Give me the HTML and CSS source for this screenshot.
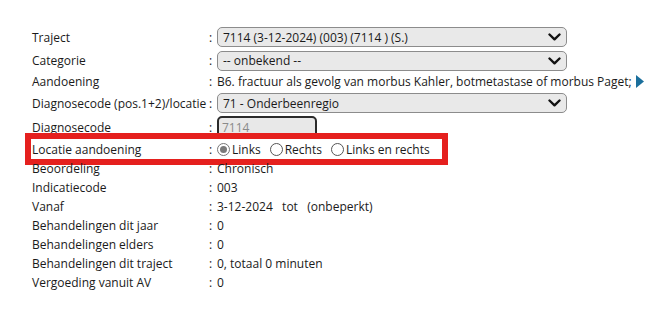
FILE: index.html
```html
<!DOCTYPE html>
<html lang="nl">
<head>
<meta charset="utf-8">
<title>Traject</title>
<link rel="stylesheet" href="styles.css">
</head>
<body>
<div class="form">
  <div class="row row-select">
    <div class="label">Traject</div>
    <div class="value"><span class="colon">:</span>
      <div class="select-wrap">
        <select class="select"><option>7114 (3-12-2024) (003) (7114 ) (S.)</option></select>
        <svg class="chev" viewBox="0 0 13 8" width="13" height="8"><path d="M1.5 1.5 L6.5 6.3 L11.5 1.5" fill="none" stroke="#111" stroke-width="2.4" stroke-linecap="round" stroke-linejoin="round"/></svg>
      </div>
    </div>
  </div>
  <div class="row row-select2">
    <div class="label">Categorie</div>
    <div class="value"><span class="colon">:</span>
      <div class="select-wrap">
        <select class="select"><option>-- onbekend --</option></select>
        <svg class="chev" viewBox="0 0 13 8" width="13" height="8"><path d="M1.5 1.5 L6.5 6.3 L11.5 1.5" fill="none" stroke="#111" stroke-width="2.4" stroke-linecap="round" stroke-linejoin="round"/></svg>
      </div>
    </div>
  </div>
  <div class="row">
    <div class="label">Aandoening</div>
    <div class="value nowrap"><span class="colon">:</span>B6. fractuur als gevolg van morbus Kahler, botmetastase of morbus Paget;<svg class="play" viewBox="0 0 8 13" width="8" height="13"><path d="M0 0 L8 6.5 L0 13 Z" fill="#1a6f9c"/></svg></div>
  </div>
  <div class="row row-select">
    <div class="label">Diagnosecode (pos.1+2)/locatie</div>
    <div class="value"><span class="colon">:</span>
      <div class="select-wrap">
        <select class="select"><option>71 - Onderbeenregio</option></select>
        <svg class="chev" viewBox="0 0 13 8" width="13" height="8"><path d="M1.5 1.5 L6.5 6.3 L11.5 1.5" fill="none" stroke="#111" stroke-width="2.4" stroke-linecap="round" stroke-linejoin="round"/></svg>
      </div>
    </div>
  </div>
  <div class="row row-select">
    <div class="label">Diagnosecode</div>
    <div class="value"><span class="colon">:</span><input class="input" type="text" value="7114" readonly></div>
  </div>
  <div class="row row-hl">
    <div class="label">Locatie aandoening</div>
    <div class="value"><span class="colon">:</span>
      <label class="radio"><span class="dot checked"></span>Links</label>
      <label class="radio"><span class="dot"></span>Rechts</label>
      <label class="radio"><span class="dot"></span>Links en rechts</label>
    </div>
  </div>
  <div class="row">
    <div class="label">Beoordeling</div>
    <div class="value"><span class="colon">:</span>Chronisch</div>
  </div>
  <div class="row">
    <div class="label">Indicatiecode</div>
    <div class="value"><span class="colon">:</span>003</div>
  </div>
  <div class="row">
    <div class="label">Vanaf</div>
    <div class="value"><span class="colon">:</span>3-12-2024&nbsp;&nbsp; tot &nbsp;&nbsp;(onbeperkt)</div>
  </div>
  <div class="row">
    <div class="label">Behandelingen dit jaar</div>
    <div class="value"><span class="colon">:</span>0</div>
  </div>
  <div class="row">
    <div class="label">Behandelingen elders</div>
    <div class="value"><span class="colon">:</span>0</div>
  </div>
  <div class="row">
    <div class="label">Behandelingen dit traject</div>
    <div class="value"><span class="colon">:</span>0, totaal 0 minuten</div>
  </div>
  <div class="row">
    <div class="label">Vergoeding vanuit AV</div>
    <div class="value"><span class="colon">:</span>0</div>
  </div>
</div>
</body>
</html>
```
FILE: styles.css
```css
html, body {
  margin: 0;
  background: #fff;
}
body {
  font-family: "Open Sans", "Liberation Sans", sans-serif;
  font-size: 12px;
  color: #1a1a1a;
}
.form {
  padding: 25px 0 0 32px;
  display: flex;
  flex-direction: column;
}
.row {
  display: grid;
  grid-template-columns: 177px auto;
  align-items: center;
  height: 19px;
}
.row-select { height: 24px; }
.row-select2 { height: 23px; }
.row-hl {
  height: 20px;
  margin-left: -1px;
  padding-left: 1px;
  width: 410px;
  outline: 6px solid #e5201e;
}
.label {
  white-space: nowrap;
}
.value {
  display: flex;
  align-items: center;
  white-space: nowrap;
}
.colon {
  display: inline-block;
  width: 8px;
}
.select-wrap {
  position: relative;
  width: 350px;
  height: 20px;
}
.select {
  appearance: none;
  -webkit-appearance: none;
  width: 100%;
  height: 20px;
  box-sizing: border-box;
  margin: 0;
  padding: 0 0 0 5px;
  border: 1px solid #8c8c8c;
  border-radius: 5px;
  background: #e9e9e9;
  font-family: inherit;
  font-size: 12px;
  color: #1a1a1a;
}
.chev {
  position: absolute;
  right: 6px;
  top: 6px;
  pointer-events: none;
}
.input {
  width: 100px;
  height: 22px;
  box-sizing: border-box;
  margin: 0;
  padding: 0 0 0 3px;
  border: 2px solid #2b2b2b;
  border-radius: 5px;
  background: #e8e8e8;
  font-family: inherit;
  font-size: 12px;
  color: #8a8a8a;
  outline: none;
}
.play {
  margin-left: 4px;
}
.radio {
  display: inline-flex;
  align-items: center;
  margin-right: 9px;
}
.dot {
  width: 13px;
  height: 13px;
  box-sizing: border-box;
  border: 1px solid #555;
  border-radius: 50%;
  background: #fff;
  margin: 0 2px 0 0;
  position: relative;
}
.dot.checked {
  border-color: #777;
}
.dot.checked::after {
  content: "";
  position: absolute;
  left: 2px;
  top: 2px;
  width: 7px;
  height: 7px;
  border-radius: 50%;
  background: #7a7a7a;
}
```
